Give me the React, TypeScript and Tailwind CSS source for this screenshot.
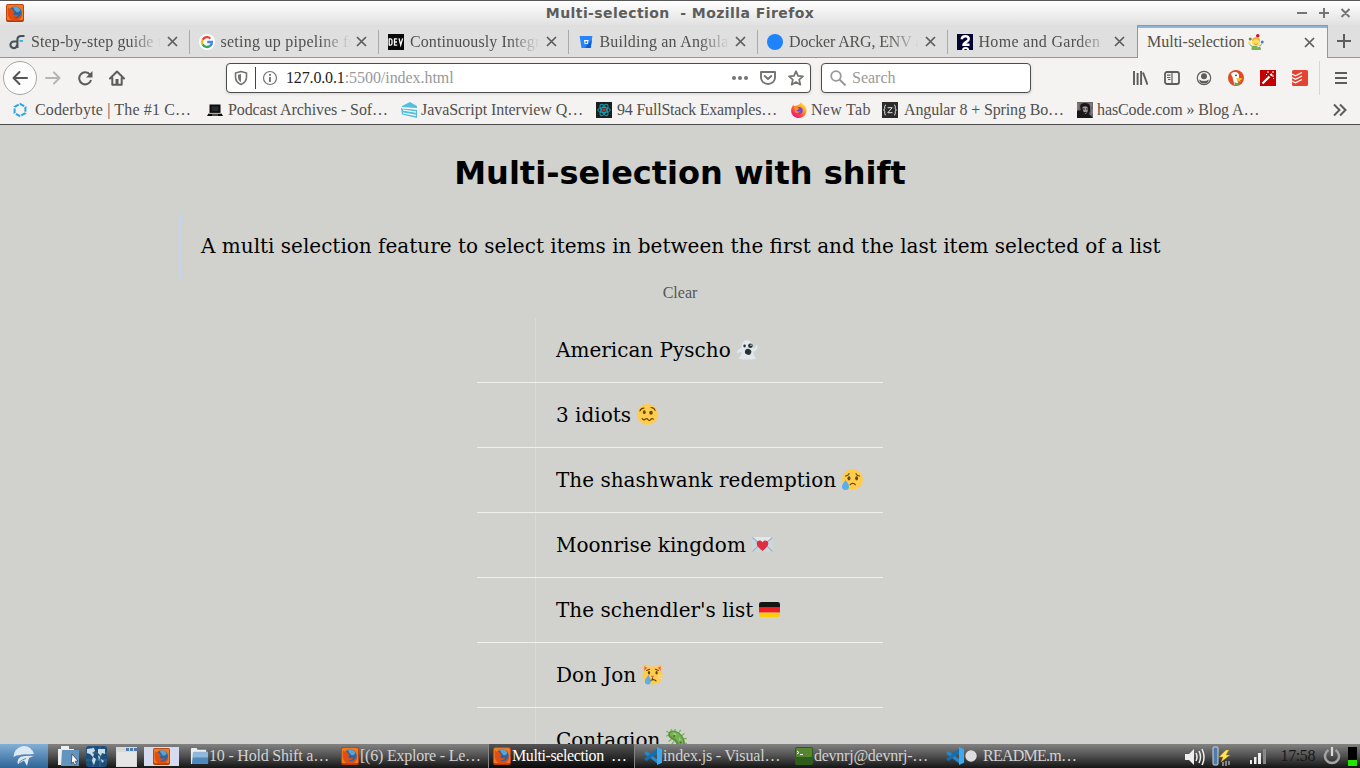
import React from "react";

type IconProps = { className?: string };
type Kids = { children?: React.ReactNode };

function Svg({ size = 16, box = 16, className = "", children }: { size?: number; box?: number; className?: string } & Kids) {
  return (
    <svg width={size} height={size} viewBox={`0 0 ${box} ${box}`} className={`shrink-0 ${className}`} fill="none">
      {children}
    </svg>
  );
}

/* ---------- emoji ---------- */

function Emoji({ children, size = 21 }: { size?: number } & Kids) {
  return (
    <Svg size={size} box={36} className={size > 16 ? "mb-px" : ""}>
      {children}
    </Svg>
  );
}

const Ghost = () => (
  <Emoji>
    <path fill="#E1E8ED" d="M35 12c-1-2-3-1-3 1 0 3-2 4-4 3C27 7 23 2 17 2 10 2 8 8 8 16c-4 0-7 3-8 7-.2 2 1 2 2 1 2-2 4-2 6-1 0 5-2 7-5 9-1 2 1 3 4 2 2 2 5 2 7 0 2 2 5 2 7 0 3 2 5 2 7 0 3 1 5 0 4-2-3-3-4-6-4-10 5-2 8-6 7-10Z" />
    <ellipse cx="13" cy="12" rx="2.2" ry="2.4" fill="#292F33" />
    <circle cx="23" cy="11.5" r="4" fill="#292F33" />
    <circle cx="24" cy="10.5" r="1.6" fill="#9AA8B2" />
    <ellipse cx="19" cy="22" rx="5.5" ry="5" fill="#292F33" transform="rotate(20 19 22)" />
  </Emoji>
);

const Woozy = () => (
  <Emoji>
    <circle cx="18" cy="18" r="18" fill="#FFCC4D" />
    <ellipse cx="12.5" cy="14" rx="2.4" ry="3.2" fill="#664500" />
    <ellipse cx="24" cy="15" rx="3" ry="3.6" fill="#664500" />
    <path stroke="#664500" strokeWidth="1.9" strokeLinecap="round" d="M5 12c1-3 4-5 7-5M24 6c3 0 6 2 7 5" />
    <path stroke="#664500" strokeWidth="2.2" strokeLinecap="round" strokeLinejoin="round" d="M9 25q3 4 5 1 3-2 5 1 2 3 4 0 3-3 5-1" />
  </Emoji>
);

const SadSweat = () => (
  <Emoji>
    <circle cx="18" cy="18" r="18" fill="#FFCC4D" />
    <ellipse cx="12" cy="16" rx="2.5" ry="3.7" fill="#664500" />
    <ellipse cx="25" cy="16" rx="2.5" ry="3.7" fill="#664500" />
    <path stroke="#664500" strokeWidth="2" strokeLinecap="round" d="M6 12c3 0 5-2 6-4M30 12c-3 0-5-2-6-4M14 27c2-3 7-3 9 0" />
    <path fill="#5DADEC" d="M6 19c3 4 6 7 6 11a6 6 0 0 1-12 0c0-4 4-7 6-11Z" />
  </Emoji>
);

const LoveLetter = () => (
  <Emoji>
    <rect y="5" width="36" height="26" rx="3" fill="#CCD6DD" />
    <path stroke="#99AAB5" strokeWidth="1.8" d="M1 30 13 18M35 30 23 18M1 6l14 12q3 2 6 0L35 6" />
    <path fill="#E1E8ED" d="M2 5h32L20 18q-2 1-4 0Z" />
    <path fill="#DD2E44" d="M18 29C11 24 8 20 8 16c0-5 7-7 10-2 3-5 10-3 10 2 0 4-3 8-10 13Z" />
  </Emoji>
);

const Germany = () => (
  <Emoji>
    <path fill="#FFCD05" d="M0 27a4 4 0 0 0 4 4h28a4 4 0 0 0 4-4v-4H0Z" />
    <path fill="#ED1F24" d="M0 14h36v9H0z" />
    <path fill="#141414" d="M32 5H4a4 4 0 0 0-4 4v5h36V9a4 4 0 0 0-4-4Z" />
  </Emoji>
);

const CryingCat = () => (
  <Emoji>
    <path fill="#FFCC4D" d="M2 1c4 0 7 2 10 4q6-2 12 0c3-2 6-4 10-4 1 0 1 8 0 13 2 5 2 10-2 15q-5 6-14 6-9 0-14-6C0 24 0 19 2 14 1 9 1 1 2 1Z" />
    <path fill="#EA596E" d="M4 4q3 1 5 3-3 2-5 5ZM32 4q-3 1-5 3 3 2 5 5ZM15 20h6l-3 4Z" />
    <ellipse cx="12" cy="15" rx="2" ry="3" fill="#664500" />
    <ellipse cx="25" cy="15" rx="2" ry="3" fill="#664500" />
    <path stroke="#664500" strokeWidth="2" strokeLinecap="round" d="m8 11 5-2M28 11l-5-2M14 29c2-3 8-3 10 0M18 24v3" />
    <path stroke="#FEE7B8" strokeWidth="1.4" d="m27 21 8-2M27 24l8 1" />
    <path fill="#5DADEC" d="M11 18c2 5 4 7 4 12a5 5 0 0 1-10 0c0-4 4-7 6-12Z" />
  </Emoji>
);

const Microbe = () => (
  <Emoji>
    <path stroke="#77B255" strokeWidth="2" strokeLinecap="round" d="m5 10-4 2M4 6 1 4M9 3V0M15 3l1-3M22 6l3-4M27 11l4-3M30 17l5-1M32 24l4 1M9 18l-4 3M13 22l-3 4M18 27l-2 5" />
    <path fill="#5C913B" d="M4 8C6 1 15 1 22 6s13 15 9 23c-3 6-9 5-12-1-3-7-5-8-10-11-4-2-6-5-5-9Z" />
    <path fill="#77B255" d="M7 8c2-4 8-4 13-1 7 5 11 13 9 19-2 4-5 3-7-1-3-6-5-8-10-11-4-2-6-3-5-6Z" />
    <path fill="#A6D388" d="M11 8q4-2 7 1l-3 2ZM22 14l4 5-3 1Z" />
    <circle cx="14" cy="12" r="1.7" fill="#3E721D" />
    <circle cx="25" cy="23" r="1.7" fill="#3E721D" />
  </Emoji>
);

const Juggler = () => (
  <Emoji size={16}>
    <path fill="#77B255" d="M8 36v-4q0-6 10-6t11 6v4ZM2 21q8 8 12 5v4Q7 31 2 21ZM32 20q-5 8-11 6v4q9-1 11-10Z" />
    <circle cx="18" cy="18" r="9" fill="#FFDC5D" />
    <path fill="#FFAC33" d="M9 17q-1-9 9-10 10 1 9 10-4-6-9-6t-9 6Z" />
    <path stroke="#C1694F" strokeWidth="1.6" d="M14 22q4 3 8 0" />
    <circle cx="5" cy="11" r="3.4" fill="#5C913B" />
    <circle cx="22" cy="4" r="4" fill="#BE1931" />
    <circle cx="32" cy="18" r="3.4" fill="#3B88C3" />
    <circle cx="3" cy="20" r="3" fill="#FFDC5D" />
  </Emoji>
);

/* ---------- site icons ---------- */

const FossIcon = () => (
  <Svg>
    <path stroke="#46505a" strokeWidth="2.1" d="M8.4 14V5.5Q8.4 2 12.5 2h3M8 10.8a3.3 3.3 0 1 1-3.2-3.3H8" />
    <path stroke="#2bb3d6" strokeWidth="1.8" d="M10.5 6.9H14" />
  </Svg>
);

const GoogleIcon = () => (
  <Svg>
    <circle cx="8" cy="8" r="8" fill="#fff" />
    <g strokeWidth="2.3">
      <path stroke="#ea4335" d="M3.6 5.7A5 5 0 0 1 11.4 4.5" />
      <path stroke="#fbbc05" d="M3.6 5.7a5 5 0 0 0 0 4.7" />
      <path stroke="#34a853" d="M3.6 10.4a5 5 0 0 0 7.7 1.3" />
      <path stroke="#4285f4" d="M8.2 8H13a5 5 0 0 1-1.8 3.8" />
    </g>
  </Svg>
);

const DevIcon = () => (
  <Svg>
    <path fill="#080808" d="M0 0h16v16H0z" />
    <g stroke="#fff" strokeWidth="1.3">
      <path d="M1.2 4.6v6.8M1 4.8h1.3q1.7 0 1.7 1.6v3.2q0 1.6-1.7 1.6H1M9.2 4.8H6.5v6.4h2.7M6.5 8H9M11 4.4l1.7 6.6 1.9-6.6" />
    </g>
  </Svg>
);

const BitbucketIcon = () => (
  <Svg>
    <path fill="#2684ff" d="M1.6 2h12.8l-1.7 12H3.5Z" />
    <path fill="#0f5bd8" d="m13.9 6-1.2 8H7l3-4Z" />
    <path fill="#fff" d="M6 6h4.5l-.6 4H6.6Z" />
    <path fill="#1868e0" d="M7.4 7.2h1.7v1.7H7.5z" />
  </Svg>
);

const BlueDot = () => (
  <Svg>
    <circle cx="8" cy="8" r="8" fill="#1f83fb" />
  </Svg>
);

const QuestionIcon = () => (
  <Svg>
    <path fill="#050530" d="M0 0h16v16H0z" />
    <path stroke="#fff" strokeWidth="2.5" d="M4.8 5.2Q4.9 2.2 8.300 2.200q3.400 0 3.400 2.700 0 1.700-2 2.700L8 8.700Q6.500 9.700 6.500 10.800h6" />
    <path stroke="#fff" strokeWidth="2" d="M6 16.400q0-2.400 2.600-2.400t2.600 2.400" />
  </Svg>
);

const CoderbyteIcon = () => (
  <Svg>
    <path stroke="#26a9e0" strokeWidth="2" strokeDasharray="4.800 1.400" d="m8 1.800 5.400 3.100v6.200L8 14.200l-5.400-3.100V4.900Z" />
  </Svg>
);

const LaptopIcon = () => (
  <Svg>
    <path fill="#0c0c0c" d="M2.500 2.500h11v8.500h-11zM1.500 11.500h13L16 14H0Z" />
    <path fill="#262b30" d="M4.500 4.300h7v5h-7z" />
    <path stroke="#ddd" strokeWidth=".6" d="M2 11.300h12M5 13h6" />
  </Svg>
);

const BooksIcon = () => (
  <Svg>
    <path fill="#54bfde" d="M1 4 9 0l7 4v2L1 5.400ZM0 6l16 1.700V16L1 12.500Z" />
    <path stroke="#fff" strokeWidth="1.200" d="m2 8 13 2.200M2 11l13 2.400M1 5.800l14.500 1" />
  </Svg>
);

const ReactIcon = () => (
  <Svg>
    <path fill="#1d1d20" d="M0 0h16v16H0z" />
    <g stroke="#0fa3b8" strokeWidth="1">
      <ellipse cx="8" cy="8" rx="6.300" ry="2.600" />
      <ellipse cx="8" cy="8" rx="6.300" ry="2.600" transform="rotate(60 8 8)" />
      <ellipse cx="8" cy="8" rx="6.300" ry="2.600" transform="rotate(120 8 8)" />
    </g>
    <circle cx="8" cy="8" r="1.700" fill="#c3342c" />
  </Svg>
);

const NewFirefox = () => (
  <Svg>
    <defs>
      <linearGradient id="nf" x1="14" y1="1" x2="3" y2="15" gradientUnits="userSpaceOnUse">
        <stop stopColor="#fff044" />
        <stop offset=".4" stopColor="#ff9a24" />
        <stop offset=".75" stopColor="#ff3a50" />
        <stop offset="1" stopColor="#e31587" />
      </linearGradient>
    </defs>
    <path fill="url(#nf)" d="M10 0c1 2 3.500 3 4.700 5.200C17.200 10 13.800 16 8 16 3 16-.5 12 .2 7.500.500 5.500 1.300 4 2.300 2.700L3 4.200 5.400 3.600C7 3 9 2.500 10 0Z" />
    <circle cx="8" cy="8.600" r="3.700" fill="#7545dd" />
    <path fill="#ff8e2a" d="M3.500 5.500q3-1.500 4.500 1-1 1.500-2.700 1.800 1.300 2.200 4 1-3 3.500-5.600.5Z" />
  </Svg>
);

const ZIcon = () => (
  <Svg>
    <path fill="#2c2c2c" d="M0 0h16v16H0z" />
    <path stroke="#e2e2e2" strokeWidth="1" d="M4 3Q2.700 3 2.700 4.500v2Q2.700 8 1.500 8q1.200 0 1.200 1.500v2Q2.700 13 4 13M12 3q1.300 0 1.300 1.500v2Q13.300 8 14.500 8q-1.200 0-1.200 1.500v2Q13.300 13 12 13M5.700 5.700h4.500l-4.400 5h4.700" />
  </Svg>
);

const PortraitIcon = () => (
  <Svg>
    <path fill="#68686a" d="M0 0h16v16H0z" />
    <path fill="#171719" d="M0 16V9l4-1Q1 1 8 1q6 0 5 6 1 2-1 5l4 4Z" />
    <path fill="#98989a" d="M5.500 5q4-2 5.500 1 0 5-2.500 6-3-2-3-7Z" />
    <path stroke="#222" d="M5.500 7H8M9 7h2M7 10.500h2.500" />
    <path stroke="#aaa" strokeWidth=".6" d="M1 1v6M14 1v4M15 7v5" />
  </Svg>
);

const FirefoxTile = ({ size = 18 }: { size?: number }) => (
  <Svg size={size} box={18}>
    <rect width="18" height="18" rx="2" fill="#b1390c" />
    <rect x=".8" y=".8" width="16.400" height="15.400" rx="1.500" fill="#ef7a22" />
    <circle cx="9.300" cy="9" r="6.600" fill="#2a65a5" />
    <path fill="#5aa4d4" d="M7 3q5-2 7.500 3-2 3-4 2Q8 6 7 3Z" />
    <path fill="#e24d12" d="M2 3.500q1 1.500 3.500 1.300Q7 5 7 6.500L9 8Q7 8.500 7.300 10q1.500 2 5 .8Q11 14 7 13.300 12 16.500 16 9q.5 7-6 7.800Q2 17 1.800 9Z" />
  </Svg>
);

/* ---------- chrome icons ---------- */

const CloseX = ({ className = "" }: IconProps) => (
  <Svg size={11} box={11} className={className}>
    <path stroke="#5c5c5a" strokeWidth="1.700" d="m1 1 9 9M10 1l-9 9" />
  </Svg>
);

const VsCode = () => (
  <Svg size={18} box={18}>
    <path fill="#2489ca" d="m.5 5.500 2-1.500L14 12.800V17L.5 6.700Z" />
    <path fill="#1070b3" d="M14 1v4.200L2.500 14l-2-1.500v-1Z" />
    <path fill="#3ba9f0" d="m13 0 5 2.200v13.600L13 18Z" />
  </Svg>
);

const Folder = () => (
  <Svg size={19} box={20}>
    <path fill="#e8edf0" d="M1 2q0-1 1-1h5l1 2h9v4H4v11H1Z" />
    <path fill="#8eb7da" d="M3 6q0-1 1-1h15v12q0 1-1 1H2Z" />
    <path fill="#4f88bb" d="M3 11h16v6q0 1-1 1H2Z" />
  </Svg>
);

/* ---------- window ---------- */

function TitleBar() {
  return (
    <div className="grid h-[25px] grid-cols-[1fr_auto_1fr] items-center border-t border-[#575757] bg-linear-to-b from-white to-[#e1e1e1] font-['DejaVu_Sans',sans-serif]">
      <div className="pl-1.5">
        <FirefoxTile />
      </div>
      <div className="text-[14px] font-bold tracking-[0.43px] whitespace-pre text-[#5d5d5d]">Multi-selection  - Mozilla Firefox</div>
      <svg className="mr-[7px] justify-self-end" width="58" height="12" viewBox="0 0 58 12" fill="none" stroke="#757575" strokeWidth="2">
        <path d="M2 6h10M24 6h10M29 1v10M46.500 2l8 8M54.500 2l-8 8" />
      </svg>
    </div>
  );
}

const tabs = [
  { icon: <FossIcon />, label: "Step-by-step guide to", track: "tracking-[0.12px]" },
  { icon: <GoogleIcon />, label: "seting up pipeline for", track: "tracking-[0.25px]" },
  { icon: <DevIcon />, label: "Continuously Integrate", track: "tracking-[0.1px]" },
  { icon: <BitbucketIcon />, label: "Building an Angular", track: "tracking-[0.2px]" },
  { icon: <BlueDot />, label: "Docker ARG, ENV and", track: "tracking-[-0.15px]" },
  { icon: <QuestionIcon />, label: "Home and Garden  |", track: "tracking-[0.3px]" },
];

function TabStrip() {
  return (
    <div className="flex h-[33px] bg-[#dfdfdf] text-[16px]">
      <div className="grid w-[1137px] grid-cols-6 border-b border-[#969696]">
        {tabs.map((t) => (
          <div key={t.label} className="flex min-w-0 items-center pt-px pl-[9px]">
            {t.icon}
            <div className={`ml-[6px] w-[130px] overflow-hidden whitespace-pre [mask-image:linear-gradient(to_right,black_76%,transparent)] ${t.track}`}>{t.label}</div>
            <CloseX className="ml-[5.5px]" />
            <div className="ml-auto h-6 w-px bg-[#aaa] [div:last-child>&]:hidden" />
          </div>
        ))}
      </div>
      <div className="flex w-[191px] items-center border-x border-t border-[#969696] bg-[#f4f3f2] pr-3 pl-[9px] shadow-[inset_0_2px_0_#8eb4d7]">
        <span className="mr-[3px]">Multi-selection</span>
        <Juggler />
        <CloseX className="ml-auto" />
      </div>
      <div className="flex flex-1 items-center justify-center border-b border-[#969696]">
        <Svg size={14} box={14}>
          <path stroke="#5c5c5a" strokeWidth="2" d="M7 0v14M0 7h14" />
        </Svg>
      </div>
    </div>
  );
}

function NavBar() {
  return (
    <div className="flex h-10 items-center text-[16px]">
      <div className="ml-[3px] flex size-[34px] items-center justify-center rounded-full border border-[#a5a5a5] bg-[#fcfcfc]">
        <Svg>
          <path stroke="#555" strokeWidth="2" strokeLinecap="round" strokeLinejoin="round" d="M15 8H1.500M7.500 2 1.500 8l6 6" />
        </Svg>
      </div>
      <Svg className="ml-2">
        <path stroke="#b5b5b3" strokeWidth="2" strokeLinecap="round" strokeLinejoin="round" d="M1 8h13.500M9 2.500 14.500 8 9 13.500" />
      </Svg>
      <Svg className="ml-4">
        <path stroke="#5c5c5a" strokeWidth="2" d="M13 4.700A6 6 0 1 0 14 10" />
        <path fill="#5c5c5a" d="M15.500 1v6.500H9Z" />
      </Svg>
      <Svg className="ml-4">
        <path stroke="#5c5c5a" strokeWidth="2" strokeLinejoin="round" strokeLinecap="round" d="m1 8.500 7-7 7 7M3.300 8v6.800h9.400V8" />
        <path fill="#5c5c5a" d="M6.500 9h3v6h-3z" />
      </Svg>
      <div className="ml-[101px] flex h-[30px] w-[585px] items-center rounded-[4px] border border-[#4c4c4c] bg-white pl-1.5 shadow-[0_1px_3px_#0002]">
        <Svg>
          <path stroke="#73736f" strokeWidth="1.600" strokeLinejoin="round" d="M8 1.500 13.500 3v4c0 4-2 6-5.500 7.500C4.500 13 2.500 11 2.500 7V3Z" />
          <path fill="#73736f" d="M8 4v8C6 11 5 9.500 5 7V4.700Z" />
        </Svg>
        <div className="ml-1.5 h-[22px] w-px bg-[#444]" />
        <Svg className="ml-1.5">
          <circle cx="8" cy="8" r="6.500" stroke="#73736f" strokeWidth="1.200" />
          <path stroke="#73736f" strokeWidth="1.900" d="M8 7v5M8 4v1.800" />
        </Svg>
        <span className="ml-2 whitespace-pre tracking-[-0.15px] text-[#222]">
          127.0.0.1<span className="tracking-[-0.05px] text-[#999]">:5500/index.html</span>
        </span>
        <Svg className="ml-auto">
          <g fill="#73736f">
            <circle cx="2" cy="8" r="2" />
            <circle cx="8" cy="8" r="2" />
            <circle cx="14" cy="8" r="2" />
          </g>
        </Svg>
        <Svg className="ml-3">
          <path stroke="#73736f" strokeWidth="1.900" strokeLinejoin="round" d="M1 2h14v5.500a7 6.500 0 0 1-14 0Z" />
          <path stroke="#73736f" strokeWidth="1.900" strokeLinecap="round" strokeLinejoin="round" d="M4.700 6 8 9l3.300-3" />
        </Svg>
        <Svg className="mr-1.5 ml-3">
          <path stroke="#73736f" strokeWidth="1.700" strokeLinejoin="round" d="m8 1.200 2 4.700 5 .4-3.800 3.400 1.200 5L8 12l-4.400 2.700 1.200-5L1 6.300l5-.4Z" />
        </Svg>
      </div>
      <div className="ml-2.5 flex h-[30px] w-[210px] items-center rounded-[4px] border border-[#4c4c4c] bg-white pl-2 shadow-[0_1px_3px_#0002]">
        <Svg>
          <circle cx="6" cy="6" r="4.800" stroke="#999" strokeWidth="1.800" />
          <path stroke="#999" strokeWidth="2" d="m9.500 9.500 6 6" />
        </Svg>
        <span className="ml-1.5 text-[#999]">Search</span>
      </div>
      <div className="ml-auto flex items-center gap-4">
        <Svg>
          <path stroke="#5c5c5a" strokeWidth="1.900" d="M2 1v14M5.600 3v12M9.100 1v14M11 2.500l4.500 12.200" />
        </Svg>
        <Svg>
          <rect x="1" y="2" width="14" height="12" rx="2" stroke="#5c5c5a" strokeWidth="1.800" />
          <path stroke="#5c5c5a" strokeWidth="1.200" d="M8 2v12M3 5.200h3.500M3 7.500h3.500M4 9.500h2.500" />
        </Svg>
        <Svg>
          <circle cx="8" cy="8" r="6.700" stroke="#5c5c5a" strokeWidth="1.200" />
          <circle cx="8" cy="6.200" r="3" fill="#5c5c5a" />
          <path fill="#5c5c5a" d="M3.300 9.500q2 1.500 4.700 1.500t4.700-1.500q0 4-4.700 4t-4.700-4Z" />
        </Svg>
        <Svg>
          <circle cx="8" cy="8" r="8" fill="#dd4b27" />
          <path fill="#fff" d="M3.500 3q3.500-2 6.500 0 1.800 2 1 5l-1.500 2 1 4.500q-2.500.800-4 .2Q5 10 4.500 7 2.500 5 3.500 3Z" />
          <path fill="#f6c32a" d="M8.500 8h4.500l1.700 1.100L12 10.200l1 1.300H9.300Z" />
          <path fill="#58a63c" d="m6.500 12 2.500 1.200 2.500-1 .5 2.600-5 .2Z" />
          <circle cx="8" cy="5.300" r=".9" fill="#234" />
        </Svg>
        <Svg>
          <path fill="#c20000" d="M0 0h16v16H0z" />
          <path stroke="#fff" strokeWidth="2.200" d="m2.500 13.500 7-7M10.500 5.500 12 4" />
          <path stroke="#fff" d="M8 1v2M13 1v2M14 6h-2M6 4l1 1M14 9l-1-1" />
        </Svg>
        <Svg>
          <rect width="16" height="16" rx="1.500" fill="#e44332" />
          <path stroke="#fff" strokeWidth="1.200" d="m0 4 3.500 1.800L10 2.500M0 7.500l3.500 1.800L10 6M0 11l3.500 1.800L10 9.500" />
        </Svg>
      </div>
      <div className="ml-[11px] h-[34px] w-px bg-[#d5d5d3]" />
      <Svg size={12} box={12} className="mr-[13px] ml-[15px]">
        <path stroke="#5c5c5a" strokeWidth="2" d="M0 1h12M0 6h12M0 11h12" />
      </Svg>
    </div>
  );
}

const bookmarks = [
  { icon: <CoderbyteIcon />, label: "Coderbyte | The #1 C…", box: "w-[195px] gap-[7px]", track: "tracking-[0.15px]" },
  { icon: <LaptopIcon />, label: "Podcast Archives - Sof…", box: "w-[194px] gap-[5px]", track: "tracking-[-0.1px]" },
  { icon: <BooksIcon />, label: "JavaScript Interview Q…", box: "w-[195px] gap-[4px]", track: "tracking-[-0.06px]" },
  { icon: <ReactIcon />, label: "94 FullStack Examples…", box: "w-[195px] gap-[5px]", track: "tracking-[-0.2px]" },
  { icon: <NewFirefox />, label: "New Tab", box: "w-[91px] gap-[4px]", track: "tracking-[0.3px]" },
  { icon: <ZIcon />, label: "Angular 8 + Spring Bo…", box: "w-[195px] gap-[6px]", track: "tracking-[-0.13px]" },
  { icon: <PortraitIcon />, label: "hasCode.com » Blog A…", box: "w-[195px] gap-[4px]", track: "tracking-[-0.1px]" },
];

function Bookmarks() {
  return (
    <div className="flex h-[27px] items-center border-b border-[#4c4c4c] pb-0.5 pl-3 text-[16px]">
      {bookmarks.map((b) => (
        <div key={b.label} className={`flex shrink-0 items-center whitespace-nowrap ${b.box} ${b.track}`}>
          {b.icon}
          <span>{b.label}</span>
        </div>
      ))}
      <Svg size={14} box={14} className="mr-[13px] ml-auto">
        <path stroke="#5c5c5a" strokeWidth="2" d="m1 1.500 5.500 5.500L1 12.500M7 1.500 12.500 7 7 12.500" />
      </Svg>
    </div>
  );
}

const movies = [
  { name: "American Pyscho", emoji: <Ghost /> },
  { name: "3 idiots", emoji: <Woozy /> },
  { name: "The shashwank redemption", emoji: <SadSweat /> },
  { name: "Moonrise kingdom", emoji: <LoveLetter /> },
  { name: "The schendler's list", emoji: <Germany /> },
  { name: "Don Jon", emoji: <CryingCat /> },
  { name: "Contagion", emoji: <Microbe /> },
];

function Page() {
  return (
    <main className="flex min-h-0 flex-1 flex-col items-center overflow-hidden bg-[#d1d2cd] pt-[29px] font-['DejaVu_Serif',serif] text-[20px] text-black">
      <h1 className="h-[38px] shrink-0 font-['DejaVu_Sans',sans-serif] text-[32px] leading-[38px] font-bold">Multi-selection with shift</h1>
      <blockquote className="mt-[22px] flex h-16 w-[1000px] shrink-0 items-center border-l border-[#c3d6f0] pl-5 whitespace-nowrap">
        A multi selection feature to select items in between the first and the last item selected of a list
      </blockquote>
      <button className="mt-[3px] h-6 shrink-0 font-['Liberation_Serif',serif] text-[16px] leading-6 text-[#555]">Clear</button>
      <ul className="mt-[13px] w-[406px] shrink-0">
        {movies.map((m) => (
          <li key={m.name} className="flex h-[65px] border-b border-[#f0f0ee] pl-[58px]">
            <div className="flex flex-1 items-center gap-[6px] border-l border-[#cfdcf0] pl-5 whitespace-nowrap">
              <span>{m.name}</span>
              {m.emoji}
            </div>
          </li>
        ))}
      </ul>
    </main>
  );
}

const tasks = [
  { icon: <Folder />, label: "10 - Hold Shift a…", box: "w-[151px]", track: "tracking-[-0.2px]" },
  { icon: <FirefoxTile />, label: "[(6) Explore - Le…", box: "w-[148px]", track: "tracking-[-0.22px]" },
  {
    icon: <FirefoxTile />,
    label: "Multi-selection  …",
    box: "w-[147px] border-x border-[#858585] bg-linear-to-b from-[#555] to-[#0a0a0a] pl-[3px] text-white",
    track: "tracking-[-0.4px]",
  },
  { icon: <VsCode />, label: "index.js - Visual…", box: "w-[151px] pl-2", track: "tracking-[-0.15px]" },
  {
    icon: (
      <Svg size={18} box={18}>
        <rect width="18" height="18" rx="2" fill="#315d1c" />
        <rect x="1" y="1" width="16" height="9" rx="1" fill="#568532" />
        <path stroke="#fff" d="m2 4 2 1.500L2 7M5 7.500h3" />
      </Svg>
    ),
    label: "devnrj@devnrj-…",
    box: "w-[152px] pl-2",
    track: "tracking-[-0.25px]",
  },
  { icon: <VsCode />, label: "README.m…", box: "w-[140px] pl-[7px]", track: "tracking-[-0.75px]", dot: true },
];

function TaskBar() {
  return (
    <div className="flex h-6 shrink-0 items-center bg-linear-to-b from-[#828282] via-[#505050] to-[#161616] text-[16px] text-[#d2d2d2]">
      <div className="flex h-full w-12 items-center justify-center bg-linear-to-b from-[#82afd5] to-[#2d6699]">
        <Svg size={22} box={22}>
          <path fill="#dce8f2" d="M.5 12Q1 3 10 1q8-.5 11 8l-5 .5Q9 9 7 10q-4 0-6.500 2ZM8 11.500q7-1.500 13.500-1L16 13l-2 8-3-5.500L5 19q-2-4 3-7.500Z" />
          <path stroke="#4f81ae" strokeWidth=".9" d="M7 11q6-.8 14-1M13 13.500q-4 1-7 4" />
        </Svg>
      </div>
      <Svg size={22} box={22} className="ml-[10px]">
        <path fill="#eee" d="M0 4h3V1h8v3h5v16H0Z" />
        <path fill="#6294c0" d="M4 5h17v16H3Z" />
        <path fill="#fff" stroke="#333" strokeWidth=".7" d="m14 9 6 7-3 .2 1.500 3-1.800.8-1.400-3-2 1.500Z" />
      </Svg>
      <Svg size={21} box={21} className="ml-1.5">
        <rect width="21" height="21" rx="3" fill="#1c4f7c" />
        <path stroke="#5c88a8" strokeWidth=".5" d="M0 7h21M0 14h21M7 0v21M14 0v21" />
        <path fill="#c9dce6" d="m1 3 7-1 1 3-3 2 2 1-1 3-3-3-3-1ZM12 3l7 0v5l-3-1-1 3-3-3ZM7 11l3 2-2 6-2-4ZM15 13l3 2-2 2ZM12 9l2 2-1 4Z" />
      </Svg>
      <Svg size={21} box={21} className="ml-[9px]">
        <path fill="#d9d9d9" d="M0 1h21v20H0z" />
        <path fill="#4b78ad" d="M10 2h3v3h-3zM14 2h3v3h-3zM18 2h3v3h-3z" />
        <path fill="#e6e6e6" d="M1 6h19v14H1z" />
      </Svg>
      <div className="mt-px ml-[7px] flex h-[19px] w-[35px] items-center justify-center bg-[#d6dbef]">
        <FirefoxTile size={17} />
      </div>
      <div className="ml-[10px] flex h-full">
        {tasks.map((t) => (
          <div key={t.label} className={`flex h-full items-center whitespace-pre ${t.box} ${t.track}`}>
            <span className="flex w-5 shrink-0 justify-center">{t.icon}</span>
            {t.dot && (
              <Svg size={12} box={12} className="mr-[6px]">
                <circle cx="6" cy="6" r="5.700" fill="#ddd" />
              </Svg>
            )}
            <span>{t.label}</span>
          </div>
        ))}
      </div>
      <div className="ml-auto flex items-center text-[#181818]">
        <Svg size={21} box={21}>
          <path fill="#eee" d="M1 8h4l5-5v16l-5-5H1Z" />
          <path stroke="#eee" strokeWidth="1.500" d="M12 7q2 4 0 8M15 5q3 6 0 12M18 3q4 8 0 16" />
        </Svg>
        <Svg size={20} box={20} className="ml-[6px]">
          <rect x="2" y="1" width="5" height="18" rx="1" fill="#4f7da8" stroke="#c5d6e6" />
          <path fill="#ffe34f" stroke="#ab8b1f" strokeWidth=".5" d="m15 4-7 7h4l-2 5 9-7h-4l3-5Z" />
          <path stroke="#ddd" d="M12 16v4M15 15v5M18 15v4" />
        </Svg>
        <Svg size={18} box={18} className="ml-[18px]">
          <path fill="#eee" d="M1 13h2v4H1zM5 10h2.500v7H5zM9 6h3v11H9z" />
          <path fill="#888" d="M14 2h3v15h-3z" />
        </Svg>
        <span className="ml-[14px] text-[16px] tracking-[-0.4px]">17:58</span>
        <Svg size={18} box={18} className="ml-[8px]">
          <path stroke="#a4a4a4" strokeWidth="2.500" d="M5.500 3a7 7 0 1 0 7 0" />
          <path stroke="#d9d9d9" strokeWidth="2.200" d="M9 0v9" />
        </Svg>
        <div className="mt-px mr-[3px] ml-[7px] flex h-[19px] w-[9px] items-end bg-black">
          <div className="h-1.5 w-full bg-[#24e600]" />
        </div>
      </div>
    </div>
  );
}

export default function App() {
  return (
    <div className="flex h-[768px] w-[1360px] flex-col overflow-hidden bg-[#f4f3f2] font-['Liberation_Serif',serif] text-[#50504e]">
      <TitleBar />
      <TabStrip />
      <NavBar />
      <Bookmarks />
      <Page />
      <TaskBar />
    </div>
  );
}
